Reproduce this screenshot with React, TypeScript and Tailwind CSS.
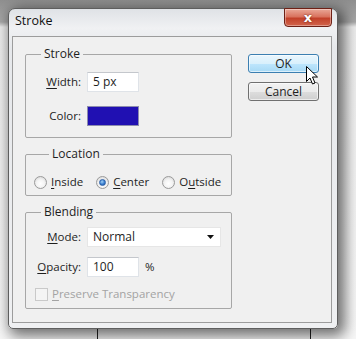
const font = "font-['Segoe_UI','Open_Sans','Noto_Sans',sans-serif]";

function U({ children }: { children: string }) {
  return <span className="underline underline-offset-[2px] decoration-[1px]">{children}</span>;
}

function Group({ title, className, children }: { title: string; className?: string; children: React.ReactNode }) {
  return (
    <fieldset className={`border border-[#a7a7a7] rounded-[2px] ${className ?? ""}`}>
      <legend className="ml-[15px] px-[3px] text-[12px] leading-[16px] text-[#1e1e1e]">{title}</legend>
      {children}
    </fieldset>
  );
}

function TextBox({ value, className }: { value: string; className?: string }) {
  return (
    <div
      className={`h-[20px] bg-white border border-[#dfe3e8] border-t-[#c4c7cc] flex items-center pl-[5px] text-[12px] text-[#1e1e1e] ${className ?? ""}`}
    >
      {value}
    </div>
  );
}

function Radio({ checked, label }: { checked?: boolean; label: React.ReactNode }) {
  return (
    <div className="flex items-center gap-[4px]">
      <div className="w-[13px] h-[13px] rounded-full border border-[#9a9a9a] bg-[radial-gradient(circle_at_50%_60%,#ffffff_0%,#f4f4f4_45%,#cfcfcf_100%)] flex items-center justify-center">
        {checked && (
          <div className="w-[7px] h-[7px] rounded-full bg-[radial-gradient(circle_at_40%_35%,#9fd0f5_0%,#3a7fd0_55%,#1a4f9c_100%)] border border-[#2a5fa8]" />
        )}
      </div>
      <span className="leading-[16px] text-[#1e1e1e]">{label}</span>
    </div>
  );
}

export default function App() {
  return (
    <div
      className={`${font} text-[11.5px] relative w-[356px] h-[339px] overflow-hidden bg-[linear-gradient(to_bottom,#8f8f8f_0px,#a8a8a8_22px,#eeeeee_27px,#f7f7f7_100%)] pt-[8px] pl-[8px]`}
    >
      {/* background ticks */}
      <div className="absolute left-[97px] top-[326px] w-px h-[13px] bg-[#222]" />
      <div className="absolute left-[310px] top-[326px] w-px h-[13px] bg-[#222]" />

      <div className="relative w-[330px] h-[321px] rounded-t-[7px] rounded-b-[5px] border border-[#5e5e5e] bg-[linear-gradient(to_bottom,#dfe2e6_0%,#f0f1f3_6%,#e6e8eb_12%,#eff0f2_100%)] shadow-[4px_4px_14px_3px_rgba(0,0,0,0.55)]">
        {/* title bar */}
        <div className="h-[27px] flex items-start justify-between">
          <span className="pl-[6px] pt-[4px] text-[12.5px] leading-[16px] text-[#111]">Stroke</span>
          <div className="-mt-px mr-[5px] w-[48px] h-[19px] rounded-b-[4px] border border-[#6d2016] bg-[linear-gradient(to_bottom,#e9a898_0%,#d9735e_45%,#c2412a_55%,#d2654c_100%)] flex items-center justify-center shadow-[inset_0_0_0_1px_rgba(255,255,255,0.35)]">
            <span className="text-white font-bold text-[13px] leading-[13px] font-['DejaVu_Sans',sans-serif] [text-shadow:0_0_2px_#5a1a10]">x</span>
          </div>
        </div>

        {/* client area */}
        <div className="ml-[3px] w-[320px] h-[287px] border border-[#9c9c9c] bg-[#f0f0f0] flex items-start">
          <div className="ml-[12px] mt-[9px] w-[207px] flex flex-col gap-[8px]">
            <Group title="Stroke" className="pt-[10px] pb-[11px]">
              <div className="grid grid-cols-[55px_52px] gap-x-[6px] gap-y-[14px] items-center text-[#1e1e1e]">
                <span className="text-right">
                  <U>W</U>idth:
                </span>
                <TextBox value="5 px" />
                <span className="text-right">Color:</span>
                <div className="h-[20px] border border-[#8c8cae] bg-[#2010b2]" />
              </div>
            </Group>

            <Group title="Location" className="pt-[12px] pb-[5px] pl-[8px]">
              <div className="flex items-center gap-[13px]">
                <Radio label={<><U>I</U>nside</>} />
                <Radio checked label={<><U>C</U>enter</>} />
                <Radio label={<>O<U>u</U>tside</>} />
              </div>
            </Group>

            <Group title="Blending" className="pt-[7px] pb-[6px]">
              <div className="grid grid-cols-[55px_auto] gap-x-[6px] gap-y-[10px] items-center text-[#1e1e1e]">
                <span className="text-right">
                  <U>M</U>ode:
                </span>
                <div className="w-[134px] h-[20px] bg-white border border-[#e6e6e6] flex items-center justify-between pl-[5px] pr-[6px] text-[12px]">
                  <span>Normal</span>
                  <svg width="7" height="4" viewBox="0 0 7 4">
                    <path d="M0 0 L7 0 L3.5 4 Z" fill="#111" />
                  </svg>
                </div>
                <span className="text-right">
                  <U>O</U>pacity:
                </span>
                <div className="flex items-center gap-[6px]">
                  <TextBox value="100" className="w-[52px]" />
                  <span>%</span>
                </div>
              </div>
              <div className="mt-[9px] pl-[9px] flex items-center gap-[4px]">
                <div className="w-[13px] h-[13px] border border-[#c9c9c9] bg-[#f4f4f4]" />
                <span className="leading-[16px] text-[#a3a3a3]">
                  <U>P</U>reserve Transparency
                </span>
              </div>
            </Group>
          </div>

          <div className="relative ml-[16px] mt-[17px] flex flex-col gap-[9px] text-[12px] text-[#1e1e1e]">
            <div className="w-[71px] h-[19px] rounded-[3px] border border-[#3c7fb1] bg-[linear-gradient(to_bottom,#eaf6fd_0%,#d9f0fc_50%,#bee6fd_51%,#a7d9f5_100%)] flex items-center justify-center shadow-[inset_0_0_0_1px_rgba(255,255,255,0.6)]">
              OK
            </div>
            <div className="w-[71px] h-[19px] rounded-[3px] border border-[#707070] bg-[linear-gradient(to_bottom,#f2f2f2_0%,#ebebeb_50%,#dddddd_51%,#cfcfcf_100%)] flex items-center justify-center shadow-[inset_0_0_0_1px_rgba(255,255,255,0.6)]">
              Cancel
            </div>
            {/* mouse cursor */}
            <svg className="absolute left-[58px] top-[12px]" width="13" height="20" viewBox="0 0 13 20">
              <path d="M0.5 0.5 L0.5 15.5 L4 12 L6.5 18 L9 17 L6.5 11 L11.5 11 Z" fill="#fff" stroke="#000" strokeWidth="1" strokeLinejoin="round" />
            </svg>
          </div>
        </div>
      </div>
    </div>
  );
}
